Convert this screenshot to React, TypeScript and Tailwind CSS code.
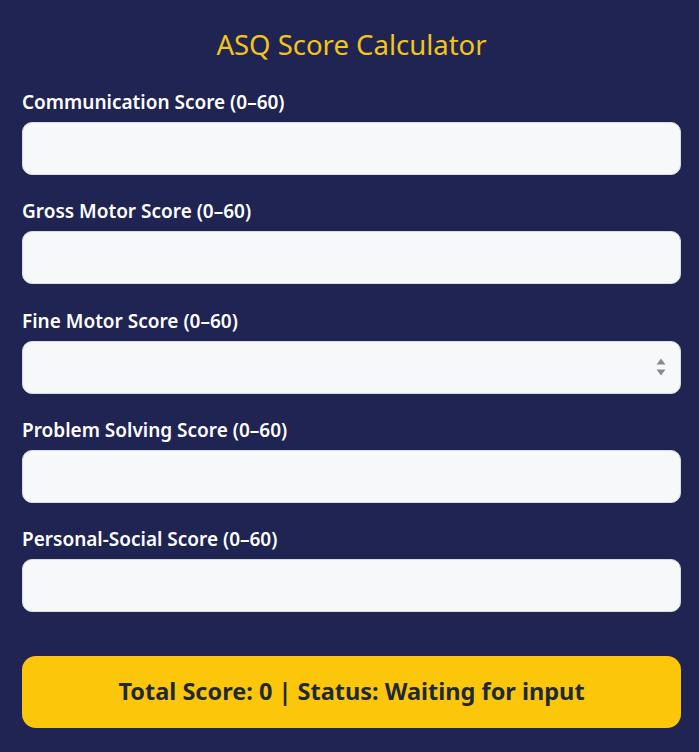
import React from "react";

const fields = [
  "Communication Score (0–60)",
  "Gross Motor Score (0–60)",
  "Fine Motor Score (0–60)",
  "Problem Solving Score (0–60)",
  "Personal-Social Score (0–60)",
];

function Spinner() {
  return (
    <div className="pointer-events-none absolute right-[15px] top-1/2 flex -translate-y-1/2 flex-col items-center gap-[4px]">
      <svg width="10" height="7" viewBox="0 0 10 7">
        <path d="M5 0.5 L9.5 6.5 L0.5 6.5 Z" fill="#8a8a8a" />
      </svg>
      <svg width="10" height="7" viewBox="0 0 10 7">
        <path d="M0.5 0.5 L9.5 0.5 L5 6.5 Z" fill="#8a8a8a" />
      </svg>
    </div>
  );
}

export default function App() {
  return (
    <div
      className="min-h-[752px] w-full bg-[#1f2452] pl-[22px] pr-[18px] pt-[26px]"
      style={{ fontFamily: '"Noto Sans", "Open Sans", sans-serif' }}
    >
      <h1 className="text-center text-[27.5px] leading-[38px] font-normal text-[#f5c518]">
        ASQ Score Calculator
      </h1>
      <div className="mt-[26px] flex flex-col">
        {fields.map((label, i) => (
          <div key={label} className="mb-[24.25px] flex flex-col">
            <label className="mb-[8px] text-[19px] leading-[24px] font-semibold text-white">
              {label}
            </label>
            <div className="relative">
              <input
                type="text"
                className="h-[53px] w-full rounded-[10px] border border-[#d9dce3] bg-[#f7f8fa] px-3 outline-none"
              />
              {i === 2 && <Spinner />}
            </div>
          </div>
        ))}
      </div>
      <div className="mt-[19.75px] flex h-[72px] items-center justify-center rounded-[14px] bg-[#fcc70b] text-[23.5px] font-bold text-[#1f2937]">
        Total Score: 0 | Status: Waiting for input
      </div>
    </div>
  );
}
